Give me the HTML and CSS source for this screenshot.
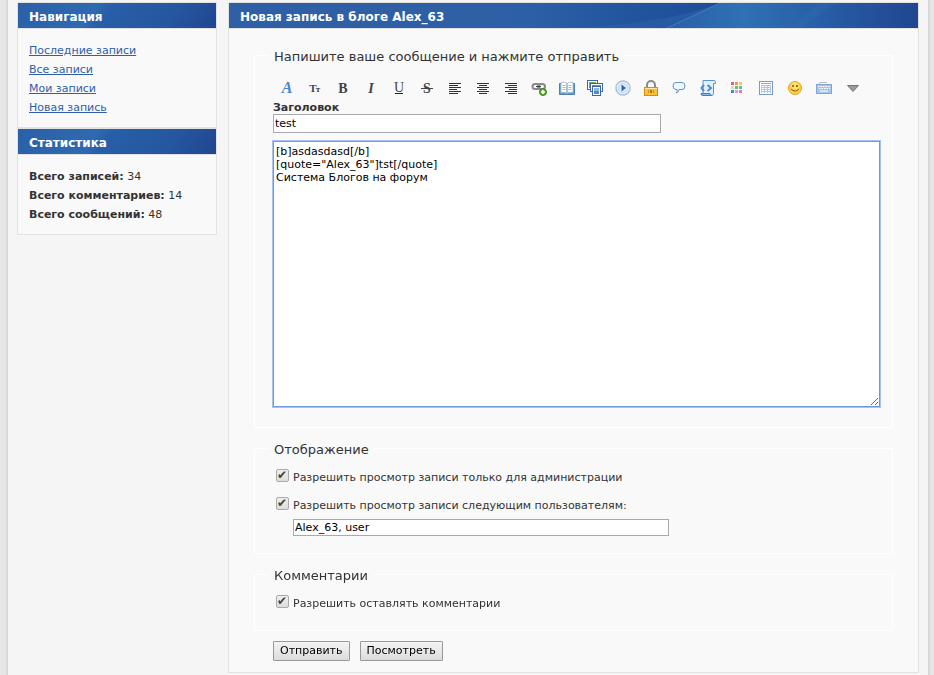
FILE: index.html
```html
<!DOCTYPE html>
<html lang="ru">
<head>
  <meta charset="UTF-8">
  <meta name="viewport" content="width=device-width, initial-scale=1.0">
  <title>Новая запись в блоге</title>
  <link rel="stylesheet" href="styles.css">
</head>
<body>
  <div class="wrapper">
    <aside class="sidebar">
      <h2 class="bar">Навигация</h2>
      <ul class="side-box">
        <li><a href="#">Последние записи</a></li>
        <li><a href="#">Все записи</a></li>
        <li><a href="#">Мои записи</a></li>
        <li><a href="#">Новая запись</a></li>
      </ul>
      <h2 class="bar bar-next">Статистика</h2>
      <ul class="side-box">
        <li><strong>Всего записей:</strong> 34</li>
        <li><strong>Всего комментариев:</strong> 14</li>
        <li><strong>Всего сообщений:</strong> 48</li>
      </ul>
    </aside>

    <main class="main">
      <h1 class="bar bar-main">
        <svg class="bar-art" width="430" height="25" viewBox="0 0 430 25" aria-hidden="true">
          <defs>
            <linearGradient id="base">
              <stop offset="0" stop-color="#2f60a6"/>
              <stop offset=".1" stop-color="#2d5fa6"/>
              <stop offset=".35" stop-color="#22549e"/>
              <stop offset=".55" stop-color="#1e4c98"/>
              <stop offset="1" stop-color="#204690"/>
            </linearGradient>
            <linearGradient id="wave">
              <stop offset="0" stop-color="#2960a8"/>
              <stop offset=".3" stop-color="#3070b3"/>
              <stop offset=".6" stop-color="#285fa8"/>
              <stop offset="1" stop-color="#204690"/>
            </linearGradient>
          </defs>
          <rect width="430" height="25" fill="url(#base)"/>
          <path d="M60 25 Q170 24 232 0 L430 0 V25 Z" fill="#2a5fa8" opacity=".7"/>
          <path d="M179 25 Q205 13 232 0 H430 V25 Z" fill="url(#wave)"/>
          <path d="M179 25 Q205 13 232 0" fill="none" stroke="#5a8bc4" opacity=".6"/>
          <path d="M305 25 Q318 10 331 0 H350 Q328 12 315 25 Z" fill="#3a75b7" opacity=".2"/>
        </svg>
        <span>Новая запись в блоге Alex_63</span>
      </h1>
      <form class="form">
        <fieldset class="group">
          <legend>Напишите ваше сообщение и нажмите отправить</legend>
          <div class="toolbar">
            <button type="button" aria-label="Шрифт"><svg width="16" height="16" viewBox="0 0 16 16"><text class="glyph italic blue" x="8" y="13">A</text></svg></button>
            <button type="button" aria-label="Размер"><svg width="16" height="16" viewBox="0 0 16 16"><text class="glyph size-big" x="6" y="12">T</text><text class="glyph size-small" x="11" y="12">т</text></svg></button>
            <button type="button" aria-label="Жирный"><svg width="16" height="16" viewBox="0 0 16 16"><text class="glyph" x="8" y="13">B</text></svg></button>
            <button type="button" aria-label="Курсив"><svg width="16" height="16" viewBox="0 0 16 16"><text class="glyph italic" x="8" y="13">I</text></svg></button>
            <button type="button" aria-label="Подчёркнутый"><svg width="16" height="16" viewBox="0 0 16 16"><text class="glyph light" x="8" y="12">U</text><path d="M4 13.5h8" stroke="#222"/></svg></button>
            <button type="button" aria-label="Зачёркнутый"><svg width="16" height="16" viewBox="0 0 16 16"><text class="glyph" x="8" y="13">S</text><path d="M2 8.5h12" stroke="#444"/></svg></button>
            <button type="button" aria-label="По левому краю"><svg width="16" height="16" viewBox="0 0 16 16"><path d="M2 3.5h12M2 5.5h9M2 7.5h12M2 9.5h8M2 11.5h12M2 13.5h9" stroke="#333"/></svg></button>
            <button type="button" aria-label="По центру"><svg width="16" height="16" viewBox="0 0 16 16"><path d="M2 3.5h12M4 5.5h8M2 7.5h12M4 9.5h8M2 11.5h12M4 13.5h8" stroke="#333"/></svg></button>
            <button type="button" aria-label="По правому краю"><svg width="16" height="16" viewBox="0 0 16 16"><path d="M2 3.5h12M5 5.5h9M2 7.5h12M6 9.5h8M2 11.5h12M5 13.5h9" stroke="#333"/></svg></button>
            <button type="button" aria-label="Ссылка"><svg width="16" height="16" viewBox="0 0 16 16"><g fill="none" stroke="#888" stroke-width="2"><rect x="1.5" y="4" width="7" height="5" rx="2.5"/><rect x="7" y="4" width="7" height="5" rx="2.5"/></g><path d="M5 6.5h5" stroke="#444"/><circle cx="12" cy="12" r="3.5" fill="#5fae35" stroke="#3b8420"/><path d="M12 10v4M10 12h4" stroke="#fff" stroke-width="1.5"/></svg></button>
            <button type="button" aria-label="Книга"><svg width="16" height="16" viewBox="0 0 16 16"><path d="M.5 3.5h15v11H.5z" fill="#6b9fcb" stroke="#4d7fae"/><path d="M2 2.500q4-1 6 1 2-2 6-1v10q-4-1-6 1-2-2-6-1z" fill="#fff" stroke="#9ab2c6" stroke-width=".8"/><path d="M8 4v9" stroke="#5f87aa"/><path d="M3.5 5.500h3m-3 2h3m-3 2h3m3-4h3m-3 2h3m-3 2h3" stroke="#b5b5b5"/></svg></button>
            <button type="button" aria-label="Изображение"><svg width="16" height="16" viewBox="0 0 16 16"><g stroke="#3d67a8"><rect x=".5" y=".5" width="10" height="9" fill="#fff"/><path d="M2 2h7v6H2z" fill="#71a957" stroke="none"/><rect x="3.5" y="3.5" width="12" height="8" fill="#fff"/><path d="M5 5h9v5H5z" fill="#d16974" stroke="none"/><rect x="5.5" y="6.5" width="8" height="9" fill="#fff"/></g><path d="M7 8h5v6H7z" fill="#4c8acb"/><path d="M7 8h5v3H7z" fill="#88b9e8"/></svg></button>
            <button type="button" aria-label="Видео"><svg width="16" height="16" viewBox="0 0 16 16"><circle cx="8" cy="8" r="7" fill="#fff" stroke="#a8bfe0" stroke-width="1.5"/><circle cx="8" cy="8" r="5" fill="#dceafa" stroke="#bdd2ef"/><path d="M6.5 4.5 11 8l-4.500 3.500z" fill="#2968b6"/></svg></button>
            <button type="button" aria-label="Скрытый текст"><svg width="16" height="16" viewBox="0 0 16 16"><path d="M4 8V5a4 4 0 0 1 8 0v3" fill="none" stroke="#888" stroke-width="2"/><rect x="1.5" y="7.5" width="13" height="8" fill="#fac03a" stroke="#d58d16"/><path d="M2 8.5h12" stroke="#ffe6a0"/><path d="M5.5 10v3m5-3v3" stroke="#d69219"/><path d="M7 10h2v3H7z" fill="#b8740d"/></svg></button>
            <button type="button" aria-label="Цитата"><svg width="16" height="16" viewBox="0 0 16 16"><path d="M5 2.500h6q3 0 3 3.500t-3 3.500H8Q8 12 5.500 13q.7-1.500.5-3.500H5Q2 9.500 2 6t3-3.500z" fill="#eef6ff" stroke="#6292c9"/></svg></button>
            <button type="button" class="wide" aria-label="Код"><svg width="16" height="16" viewBox="0 0 16 16"><path d="M3 .5h11q2 0 1.500 3h-2v10q0 2-2 2H3q-2 0-1.500-2H3z" fill="#e3f0fc" stroke="#5b91cd"/><path d="M1 13.500h9q0 2 2 2H3q-2 0-2-2z" fill="#8dbbe8" stroke="#437fc0"/><path d="M4 5 1.500 8 4 11m3.500-6L11 8l-3.500 3" fill="none" stroke="#4a8dd2" stroke-width="2"/></svg></button>
            <button type="button" class="wide" aria-label="Цвет"><svg width="16" height="16" viewBox="0 0 16 16"><path d="M2 2h3v3H2z" fill="#e76468"/><path d="M6 2h3v3H6z" fill="#f08d62"/><path d="M10 2h3v3h-3z" fill="#efc95e"/><path d="M2 6h3v3H2z" fill="#c5e6ae"/><path d="M6 6h3v3H6z" fill="#58c768"/><path d="M10 6h3v3h-3z" fill="#4bc4b1"/><path d="M2 10h3v3H2z" fill="#5385ba"/><path d="M6 10h3v3H6z" fill="#d99add"/><path d="M10 10h3v3h-3z" fill="#ef78b2"/></svg></button>
            <button type="button" class="wide" aria-label="Таблица"><svg width="16" height="16" viewBox="0 0 16 16"><rect x="1.5" y="1.5" width="13" height="13" fill="#fff" stroke="#7899cf"/><path d="M3 3.5h10" stroke="#8abf83"/><path d="M3 5h10v8H3z" fill="#afc6e7"/><path d="M4 6.500h2m1 0h2m1 0h2m-8 2h2m1 0h2m1 0h2m-8 2h2m1 0h2m1 0h2m-8 2h2m1 0h2m1 0h2" stroke="#fff"/></svg></button>
            <button type="button" class="wide" aria-label="Смайлики"><svg width="16" height="16" viewBox="0 0 16 16"><circle cx="8" cy="8" r="6.5" fill="#fbd04a" stroke="#dda51f"/><circle cx="8" cy="6" r="4" fill="#ffe58a" opacity=".6"/><path d="M6 5v2m4-2v2" stroke="#805300" stroke-width="1.5"/><path d="M4 9q4 4 8 0" fill="none" stroke="#8b5a00"/></svg></button>
            <button type="button" class="wide" aria-label="Клавиатура"><svg width="16" height="16" viewBox="0 0 16 16"><path d="M3 5V3.500Q3 2.500 5 2.500h6" fill="none" stroke="#bbb"/><rect x=".5" y="4.5" width="15" height="9" fill="#a9c4ea" stroke="#83a5d6"/><path d="M2 6.500h12M3 8.500h11" stroke="#fff" stroke-dasharray="1.5 1"/><path d="M4 11h8" stroke="#fff"/></svg></button>
            <button type="button" class="wide" aria-label="Ещё"><svg width="16" height="16" viewBox="0 0 16 16"><path d="M2.5 5.500h11L8 11.500z" fill="#999" stroke="#777"/></svg></button>
          </div>
          <label class="title-label" for="title">Заголовок</label>
          <input class="text title-input" id="title" type="text" value="test">
          <textarea class="message" aria-label="Сообщение" autofocus>
[b]asdasdasd[/b]
[quote="Alex_63"]tst[/quote]
Система Блогов на форум</textarea>
        </fieldset>

        <fieldset class="group">
          <legend>Отображение</legend>
          <div class="check"><input type="checkbox" id="admins" checked><label for="admins">Разрешить просмотр записи только для администрации</label></div>
          <div class="check"><input type="checkbox" id="allowed" checked><label for="allowed">Разрешить просмотр записи следующим пользователям:</label></div>
          <input class="text users-input" type="text" value="Alex_63, user" aria-label="Пользователи">
        </fieldset>

        <fieldset class="group">
          <legend>Комментарии</legend>
          <div class="check"><input type="checkbox" id="comments" checked><label for="comments">Разрешить оставлять комментарии</label></div>
        </fieldset>

        <div class="actions">
          <button type="submit">Отправить</button>
          <button type="button">Посмотреть</button>
        </div>
      </form>
    </main>
  </div>
  <script>
    // put the cursor at the end of the message
    const message = document.querySelector('.message');
    message.focus();
    message.setSelectionRange(message.value.length, message.value.length);
  </script>
</body>
</html>
```
FILE: styles.css
```css
* {
  box-sizing: border-box;
}
body {
  margin: 0;
  background: #e6e6e6;
  color: #333;
  font: 11px/19px Verdana, "DejaVu Sans", sans-serif;
}
.wrapper {
  display: flex;
  align-items: flex-start;
  gap: 11px;
  min-height: 100vh;
  margin: 0 4px 0 6px;
  padding: 2px 9px;
  background: #f5f5f5;
  border: solid #d8d8d8;
  border-width: 0 2px;
}
.sidebar,
.main {
  background: #f9f9f9;
  border: 1px solid #e2e2e2;
}
.sidebar {
  flex: 0 0 200px;
}
.main {
  flex: 1;
  min-width: 0;
}
.bar {
  height: 26px;
  margin: 0;
  padding: 0 11px;
  border-bottom: 1px solid #e2e2e2;
  background: linear-gradient(125deg, #2a60a8 0, #2e6aaf 38%, #285fa8 44%, #2557a0 75%, #204690 100%);
  color: #fff;
  font-size: 12px;
  line-height: 28px;
}
.bar-next {
  height: 28px;
  border-top: 2px solid #e2e2e2;
}
.bar-main {
  position: relative;
  background: #2f60a6;
}
.bar-main span {
  position: relative;
}
.bar-art {
  position: absolute;
  top: 0;
  right: 0;
}
.side-box {
  margin: 0;
  padding: 12px 11px 10px;
  list-style: none;
}
.side-box a {
  color: #2f60a6;
}
.form {
  padding: 14px 25px 11px;
}
.group {
  min-width: 0;
  margin: 0 0 8px;
  padding: 0 12px 17px 18px;
  border: 1px solid #fff;
}
legend {
  margin-left: -4px;
  padding: 4px 5px 0;
  font-size: 13px;
  line-height: 20px;
}
.toolbar {
  display: flex;
  height: 28px;
  margin-top: 7px;
}
.toolbar button {
  display: flex;
  align-items: center;
  justify-content: center;
  width: 28px;
  padding: 0;
  border: 0;
  background: none;
}
.toolbar .wide {
  width: 29px;
}
.toolbar svg {
  overflow: visible;
}
.glyph {
  fill: #444;
  font: bold 14px "Liberation Serif", serif;
  text-anchor: middle;
}
.light {
  font-weight: normal;
}
.italic {
  font-style: italic;
}
.blue {
  fill: #4a83d4;
  font-size: 16px;
}
.size-big {
  font-size: 11px;
}
.size-small {
  font-size: 9px;
}
.title-label {
  display: block;
  font-weight: bold;
  line-height: 12px;
}
.text {
  display: block;
  height: 19px;
  padding: 1px;
  border: 1px solid #a9a9a9;
  background: #fff;
  color: #000;
  font: 11px/15px Verdana, "DejaVu Sans", sans-serif;
}
.title-input {
  width: 64%;
}
.message {
  display: block;
  width: 100%;
  height: 266px;
  margin: 8px 0 3px;
  padding: 3px 2px;
  border: 1px solid #7099dd;
  outline: 1px solid #a5c2f3;
  background: #fff;
  color: #000;
  font: 11px/13px Verdana, "DejaVu Sans", sans-serif;
}
.check {
  display: flex;
  gap: 4px;
  margin-top: 8px;
  padding: 0 3px;
}
.check + .check {
  margin-top: 9px;
}
.check input {
  width: 13px;
  height: 13px;
  margin: 1px 0 0;
  appearance: none;
  border: 1px solid #aaa;
  border-radius: 2px;
  background: linear-gradient(#eee, #ddd);
}
.check input:checked::after {
  content: "✔";
  display: block;
  color: #444;
  font: 12px/11px "DejaVu Sans", sans-serif;
}
.users-input {
  width: 62%;
  height: 17px;
  margin: 4px 0 0 20px;
  padding: 0 1px;
}
.actions {
  display: flex;
  gap: 10px;
  padding: 2px 0 0 19px;
}
.actions button {
  height: 20px;
  padding: 0 6px;
  border: 1px solid #999;
  border-radius: 1px;
  background: linear-gradient(#f4f4f4, #dcdcdc);
  color: #000;
  font: 11px/18px Verdana, "DejaVu Sans", sans-serif;
}
```
